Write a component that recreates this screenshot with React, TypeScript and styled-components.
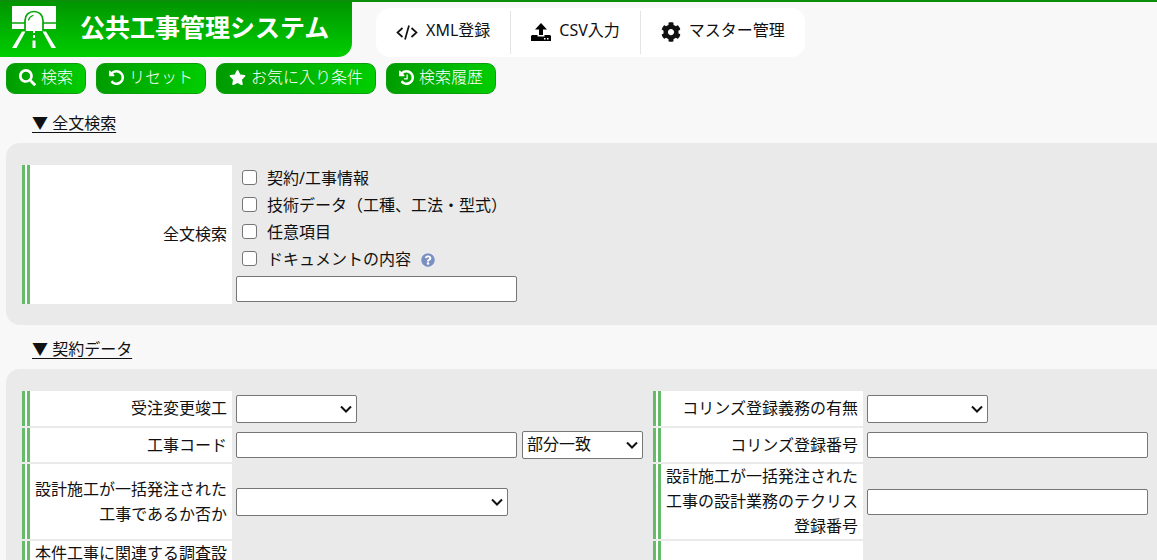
import React, { useId } from 'react';
import styled, { createGlobalStyle } from 'styled-components';
import { FaSearch, FaStar, FaCog, FaQuestionCircle } from 'react-icons/fa';

const GlobalStyle = createGlobalStyle`
  *, *::before, *::after { box-sizing: border-box; }
  body {
    margin: 0;
    background: #f8f8f8;
    color: #111;
    font-family: "Noto Sans", "Noto Sans CJK JP", sans-serif;
    font-size: 16px;
    font-weight: 400;
    line-height: 25px;
  }
  input, select, button { font: inherit; color: inherit; }
`;

const Header = styled.header`
  display: flex;
  align-items: flex-start;
  gap: 24px;
  border-top: 2px solid #0b8f0b;
`;

const Brand = styled.h1`
  display: flex;
  align-items: center;
  gap: 24px;
  width: 352px;
  height: 55px;
  margin: 0;
  padding: 0 12px 4px;
  border-radius: 0 0 14px 0;
  background: linear-gradient(#009600, #00ce00);
  color: #fff;
  font-size: 25px;
  font-weight: 700;
  white-space: nowrap;
`;

const Nav = styled.nav`
  display: flex;
  margin-top: 6px;
  padding: 3px 0;
  border-radius: 14px;
  background: #fff;
`;

const NavLink = styled.a`
  display: flex;
  align-items: center;
  gap: 8px;
  height: 43px;
  padding: 0 20px 5px;
  color: inherit;
  text-decoration: none;
  white-space: nowrap;

  & + & { border-left: 1px solid #e4e4e4; }
  svg { margin-top: 4px; }
`;

const Toolbar = styled.div`
  display: flex;
  gap: 10px;
  padding: 6px 6px 5px;
`;

const ActionButton = styled.button`
  display: flex;
  align-items: center;
  gap: 5px;
  height: 31px;
  padding: 0 12px 2px;
  border: 1px solid #0a9f0a;
  border-radius: 9px;
  background: linear-gradient(100deg, #009a00, #00cf00);
  color: #fff;
  font-weight: 300;
  white-space: nowrap;
`;

const SectionTitle = styled.h2`
  margin: 0;
  padding: 12px 32px 7px;
  font-size: 16px;
  font-weight: 400;

  a { color: inherit; text-underline-offset: 3px; }
`;

const Panel = styled.section`
  margin-left: 6px;
  padding: 20px 5px 19px 14px;
  border-radius: 14px 0 0 14px;
  background: #eaeaea;
`;

const FormTable = styled.table`
  width: 100%;
  border-spacing: 2px;
  table-layout: fixed;
`;

const LabelCol = styled.col` width: 210px; `;

const FieldCol = styled.col` width: 417px; `;

const Row = styled.tr<{ $height: number }>` height: ${p => p.$height}px; `;

const LabelCell = styled.th<{ $top?: boolean }>`
  padding: 0 5px 0 3px;
  border-left: 8px double #66bb6a;
  background: #fff;
  font-weight: 400;
  text-align: right;
  vertical-align: ${p => (p.$top ? 'top' : 'middle')};
`;

const FieldCell = styled.td` padding: 0 2px; `;

const Fields = styled.div`
  display: flex;
  align-items: center;
  gap: 5px;
`;

const Stack = styled.div`
  display: grid;
  gap: 3px;
  padding-bottom: 2px;
`;

const TextInput = styled.input`
  display: block;
  width: 281px;
  height: 26px;
  padding: 0 4px;
  border: 1px solid #767676;
  border-radius: 2px;
  background: #fff;
`;

const SelectWrap = styled.span<{ $width: number }>`
  display: grid;
  align-items: center;
  width: ${p => p.$width}px;

  > * { grid-area: 1 / 1; }
  svg { justify-self: end; margin-right: 5px; pointer-events: none; }
`;

const SelectBox = styled.select`
  appearance: none;
  width: 100%;
  height: 28px;
  padding: 0 20px 2px 4px;
  border: 1px solid #767676;
  border-radius: 2px;
  background: #fff;
`;

const CheckRow = styled.div`
  display: flex;
  align-items: center;
  height: 27px;
  padding-left: 6px;

  label { padding-left: 10px; }
`;

const CheckBox = styled.input`
  appearance: none;
  width: 15px;
  height: 15px;
  margin: 0 0 3px;
  border: 1px solid #767676;
  border-radius: 3px;
  background: #fff;
  &:checked { background: #0a9f0a; }
`;

const HelpButton = styled.button`
  display: flex;
  margin-left: 10px;
  padding: 0;
  border: 0;
  border-radius: 50%;
  background: #fff;
  color: #7b90c2;
`;

function TunnelLogo() {
  return (
    <svg width="44" height="43" viewBox="0 0 44 43" aria-hidden="true">
      <path fill="#fff" d="M0 0H44V23H0Z" />
      <path fill="none" stroke="#04a504" strokeWidth="1.5" d="M0 17H44" />
      <path fill="#fff" stroke="#04a504" strokeWidth="1.7" d="M13 25V14.5C13 9 17 5.5 22 5.5S31 9 31 14.5V25" />
      <path fill="none" stroke="#04a504" strokeWidth="1.3" strokeLinecap="round" d="M16.5 14Q17.5 10.5 21 9.5" />
      <path fill="#fff" d="M10 25.5H13.5L4.5 42H0ZM30.5 25.5H34L44 42H39.5ZM21 24H23V27H21ZM21 29H23V32H21ZM20.5 34.5H23.5V42H20.5Z" />
    </svg>
  );
}

function CodeIcon() {
  return (
    <svg width="22" height="18" viewBox="0 0 22 18" fill="none" stroke="#111" strokeWidth="1.7" aria-hidden="true">
      <path d="M6.5 5L1.5 9.5L6.5 14M15.5 5L20.5 9.5L15.5 14M13 2.5L9 16.5" />
    </svg>
  );
}

function UploadIcon() {
  return (
    <svg width="20" height="20" viewBox="0 0 20 20" fill="#000" aria-hidden="true">
      <path d="M10 1L16 7.5H12V13H8V7.5H4Z" />
      <path fillRule="evenodd" d="M1 13H6.5V14.5H13.5V13H19L20 14V19H0V14ZM13 16V17.5H14.5V16ZM16 16V17.5H17.5V16Z" />
    </svg>
  );
}

const ARROW_PATH =
  'M1664 896q0 156-61 298t-164 245-245 164-298 61q-172 0-327-72.5t-264-204.5q-7-10-6.5-22.5t8.5-20.5l137-138q10-9 25-9 16 2 23 12 73 95 179 147t225 52q104 0 198.5-40.5t163.5-109.5 109.5-163.5 40.5-198.5-40.5-198.5-109.5-163.5-163.5-109.5-198.5-40.5q-98 0-188 35.5t-160 101.5l137 138q31 30 14 69-17 40-59 40h-448q-26 0-45-19t-19-45v-448q0-42 40-59 39-17 69 14l130 129q107-101 244.5-156.5t284.5-55.5q156 0 298 61t245 164 164 245 61 298z';
const HANDS_PATH =
  'M1024 608v448q0 14-9 23t-23 9h-320q-14 0-23-9t-9-23v-64q0-14 9-23t23-9h224v-352q0-14 9-23t23-9h64q14 0 23 9t9 23z';

function TurnBackIcon({ hands }: { hands?: boolean }) {
  return (
    <svg width="15" height="15" viewBox="128 128 1536 1536" fill="currentColor" aria-hidden="true">
      <path d={ARROW_PATH} />
      {hands && <path d={HANDS_PATH} />}
    </svg>
  );
}

function Select({ width, label, id, option = '' }: { width: number; label?: string; id?: string; option?: string }) {
  return (
    <SelectWrap $width={width}>
      <SelectBox id={id} aria-label={label}><option>{option}</option></SelectBox>
      <svg width="12" height="8" viewBox="0 0 12 8" fill="none" stroke="#111" strokeWidth="2" aria-hidden="true">
        <path d="M1 1.5L6 6.5L11 1.5" />
      </svg>
    </SelectWrap>
  );
}

function Check({ label, children }: { label: string; children?: React.ReactNode }) {
  const id = useId();
  return (
    <CheckRow>
      <CheckBox type="checkbox" id={id} />
      <label htmlFor={id}>{label}</label>
      {children}
    </CheckRow>
  );
}

export default function App() {
  return (
    <>
      <GlobalStyle />
      <Header>
        <Brand><TunnelLogo />公共工事管理システム</Brand>
        <Nav>
          <NavLink href="#xml"><CodeIcon />XML登録</NavLink>
          <NavLink href="#csv"><UploadIcon />CSV入力</NavLink>
          <NavLink href="#master"><FaCog size={20} />マスター管理</NavLink>
        </Nav>
      </Header>
      <main>
        <Toolbar>
          <ActionButton type="button"><FaSearch size={17} />検索</ActionButton>
          <ActionButton type="button"><TurnBackIcon />リセット</ActionButton>
          <ActionButton type="button"><FaStar size={17} />お気に入り条件</ActionButton>
          <ActionButton type="button"><TurnBackIcon hands />検索履歴</ActionButton>
        </Toolbar>

        <SectionTitle><a href="#fulltext">▼ 全文検索</a></SectionTitle>
        <Panel id="fulltext">
          <FormTable>
            <colgroup><LabelCol /><col /></colgroup>
            <tbody>
              <Row $height={139}>
                <LabelCell scope="row"><label htmlFor="fulltext-query">全文検索</label></LabelCell>
                <FieldCell>
                  <Stack>
                    <div>
                      <Check label="契約/工事情報" />
                      <Check label="技術データ（工種、工法・型式）" />
                      <Check label="任意項目" />
                      <Check label="ドキュメントの内容">
                        <HelpButton type="button" aria-label="ヘルプ"><FaQuestionCircle size={14} /></HelpButton>
                      </Check>
                    </div>
                    <TextInput id="fulltext-query" type="text" />
                  </Stack>
                </FieldCell>
              </Row>
            </tbody>
          </FormTable>
        </Panel>

        <SectionTitle><a href="#contract">▼ 契約データ</a></SectionTitle>
        <Panel id="contract">
          <FormTable>
            <colgroup><LabelCol /><FieldCol /><LabelCol /><col /></colgroup>
            <tbody>
              <Row $height={35}>
                <LabelCell scope="row"><label htmlFor="order-state">受注変更竣工</label></LabelCell>
                <FieldCell><Select id="order-state" width={121} /></FieldCell>
                <LabelCell scope="row"><label htmlFor="corins-duty">コリンズ登録義務の有無</label></LabelCell>
                <FieldCell><Select id="corins-duty" width={121} /></FieldCell>
              </Row>
              <Row $height={34}>
                <LabelCell scope="row"><label htmlFor="work-code">工事コード</label></LabelCell>
                <FieldCell>
                  <Fields>
                    <TextInput id="work-code" type="text" />
                    <Select width={121} label="一致条件" option="部分一致" />
                  </Fields>
                </FieldCell>
                <LabelCell scope="row"><label htmlFor="corins-number">コリンズ登録番号</label></LabelCell>
                <FieldCell><TextInput id="corins-number" type="text" /></FieldCell>
              </Row>
              <Row $height={75}>
                <LabelCell scope="row"><label htmlFor="design-build">設計施工が一括発注された工事であるか否か</label></LabelCell>
                <FieldCell><Select id="design-build" width={272} /></FieldCell>
                <LabelCell scope="row"><label htmlFor="tecris-number">設計施工が一括発注された工事の設計業務のテクリス登録番号</label></LabelCell>
                <FieldCell><TextInput id="tecris-number" type="text" /></FieldCell>
              </Row>
              <Row $height={75}>
                <LabelCell scope="row" $top>本件工事に関連する調査設</LabelCell>
                <FieldCell />
                <LabelCell scope="row" />
                <FieldCell />
              </Row>
            </tbody>
          </FormTable>
        </Panel>
      </main>
    </>
  );
}
